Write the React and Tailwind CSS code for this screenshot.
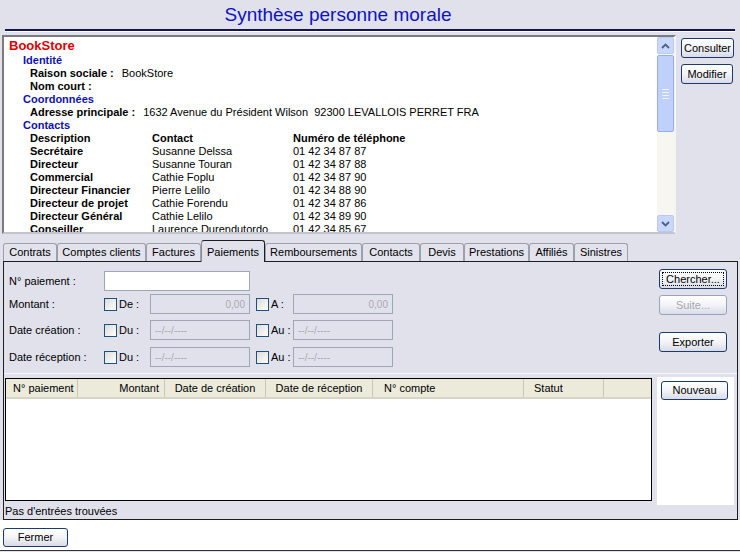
import React from 'react';

const Btn = ({ children, className = '', disabled = false, focused = false }) => (
  <button
    className={`flex items-center justify-center rounded-[3px] border bg-gradient-to-b from-white via-[#f3f4f8] to-[#d9dce7] text-[11px] leading-none ${
      disabled ? 'border-[#9aa3bd] text-[#a7a7ad]' : 'border-[#1c3a6b] text-black'
    } ${className}`}
  >
    {focused ? (
      <span className="flex h-[calc(100%-4px)] w-[calc(100%-4px)] items-center justify-center border border-dotted border-black">
        {children}
      </span>
    ) : (
      children
    )}
  </button>
);

const Check = () => (
  <span className="inline-block h-[13px] w-[13px] border border-[#1c5180] bg-gradient-to-br from-[#dcdcd7] to-white" />
);

const Field = ({ className = '', children, align = 'text-left' }) => (
  <div
    className={`flex h-[20px] items-center border border-[#9ea6b9] bg-[#e1e1ec] px-[4px] text-[10px] text-[#a9a9b1] ${align} ${className}`}
  >
    <span className="w-full">{children}</span>
  </div>
);

const Chevron = ({ down = false }) => (
  <svg width="9" height="6" viewBox="0 0 9 6">
    <path
      d={down ? 'M1 1 L4.5 4.5 L8 1' : 'M1 5 L4.5 1.5 L8 5'}
      fill="none"
      stroke="#4d6185"
      strokeWidth="1.8"
    />
  </svg>
);

const tabs = [
  { label: 'Contrats', w: 'w-[54px]' },
  { label: 'Comptes clients', w: 'w-[89px]' },
  { label: 'Factures', w: 'w-[55px]' },
  { label: 'Paiements', w: 'w-[64px]', active: true },
  { label: 'Remboursements', w: 'w-[97px]' },
  { label: 'Contacts', w: 'w-[58px]' },
  { label: 'Devis', w: 'w-[44px]' },
  { label: 'Prestations', w: 'w-[65px]' },
  { label: 'Affiliés', w: 'w-[45px]' },
  { label: 'Sinistres', w: 'w-[54px]' },
];

const contacts = [
  ['Secrétaire', 'Susanne Delssa', '01 42 34 87 87'],
  ['Directeur', 'Susanne Touran', '01 42 34 87 88'],
  ['Commercial', 'Cathie Foplu', '01 42 34 87 90'],
  ['Directeur Financier', 'Pierre Lelilo', '01 42 34 88 90'],
  ['Directeur de projet', 'Cathie Forendu', '01 42 34 87 86'],
  ['Directeur Général', 'Cathie Lelilo', '01 42 34 89 90'],
  ['Conseiller', 'Laurence Durendutordo', '01 42 34 85 67'],
];

export default function App() {
  return (
    <div className="flex h-[552px] w-[740px] flex-col overflow-hidden bg-[#e1e1ec] font-['Liberation_Sans',Arial,sans-serif] text-[11px] text-black">
      {/* Titre */}
      <div className="h-[29px] w-[676px] pt-[4px] text-center text-[19px] leading-[22px] text-[#0c12c4]">
        Synthèse personne morale
      </div>
      <div className="mx-[5px] h-[2px] bg-[#15154d]" />
      <div className="mx-[5px] h-[1px] bg-white" />
      <div className="h-[3px]" />

      {/* Fiche */}
      <div className="flex h-[199px]">
        <div className="ml-[2px] flex w-[674px] border-2 border-t-[#7b7b7b] border-l-[#7b7b7b] border-r-[#f4f4f4] border-b-[#c4c4cf] bg-white">
          <div className="flex-1 overflow-hidden pl-[5px] leading-[13px]">
            <div className="h-[17px] text-[13px] leading-[17px] font-bold text-[#e00000]">BookStore</div>
            <div className="pl-[14px] font-bold text-[#1010b4]">Identité</div>
            <div className="pl-[21px]">
              <span className="font-bold">Raison sociale :</span>
              <span className="ml-[8px]">BookStore</span>
            </div>
            <div className="pl-[21px] font-bold">Nom court :</div>
            <div className="pl-[14px] font-bold text-[#1010b4]">Coordonnées</div>
            <div className="pl-[21px] whitespace-pre">
              <span className="font-bold">Adresse principale :</span>
              <span className="ml-[8px]">1632 Avenue du Président Wilson  92300 LEVALLOIS PERRET FRA</span>
            </div>
            <div className="pl-[14px] font-bold text-[#1010b4]">Contacts</div>
            <div className="grid grid-cols-[122px_141px_1fr] pl-[21px]">
              <span className="font-bold">Description</span>
              <span className="font-bold">Contact</span>
              <span className="font-bold">Numéro de téléphone</span>
              {contacts.map(([d, c, t]) => (
                <React.Fragment key={d}>
                  <span className="font-bold">{d}</span>
                  <span>{c}</span>
                  <span>{t}</span>
                </React.Fragment>
              ))}
            </div>
          </div>
          {/* Barre de défilement */}
          <div className="flex w-[17px] flex-col bg-[#f7f6f1]">
            <div className="flex h-[17px] items-center justify-center rounded-[2px] border border-[#b9c9ef] bg-[#c8d7fb]">
              <Chevron />
            </div>
            <div className="mt-[1px] flex h-[77px] flex-col items-center justify-center gap-[2px] rounded-[2px] border border-[#98aee8] bg-[#bfd0fb]">
              <span className="h-[1px] w-[7px] bg-[#eef3ff]" />
              <span className="h-[1px] w-[7px] bg-[#eef3ff]" />
              <span className="h-[1px] w-[7px] bg-[#eef3ff]" />
              <span className="h-[1px] w-[7px] bg-[#eef3ff]" />
            </div>
            <div className="flex-1" />
            <div className="flex h-[17px] items-center justify-center rounded-[2px] border border-[#b9c9ef] bg-[#c8d7fb]">
              <Chevron down />
            </div>
          </div>
        </div>
        <div className="flex flex-col pl-[5px] pt-[3px]">
          <Btn className="h-[20px] w-[53px]">Consulter</Btn>
          <Btn className="mt-[6px] h-[20px] w-[52px]">Modifier</Btn>
        </div>
      </div>

      {/* Onglets */}
      <div className="mt-[6px] flex h-[21px] items-end pl-[3px]">
        {tabs.map((t) =>
          t.active ? (
            <div
              key={t.label}
              className={`relative z-10 -mb-px flex h-[22px] items-start justify-center rounded-t-[3px] border border-b-0 border-[#1e1e1e] border-l-[#8b8b95] bg-[#e1e1ec] pt-[3px] ${t.w}`}
            >
              {t.label}
            </div>
          ) : (
            <div
              key={t.label}
              className={`flex h-[18px] items-center justify-center rounded-t-[3px] border border-b-0 border-[#9ba0ac] bg-[#e3e3ed] ${t.w}`}
            >
              {t.label}
            </div>
          )
        )}
      </div>

      {/* Panneau Paiements */}
      <div className="ml-[3px] flex h-[259px] w-[735px] flex-col border border-[#1e1e1e] bg-[#e1e1ec]">
        <div className="flex h-[110px]">
          <div className="flex flex-col pl-[5px]">
            <div className="mt-[9px] flex h-[20px] items-center">
              <span className="w-[95px]">N° paiement :</span>
              <div className="h-[20px] w-[146px] border border-[#9ea6b9] bg-white" />
            </div>
            <div className="mt-[3px] flex h-[20px] items-center">
              <span className="w-[95px]">Montant :</span>
              <span className="flex w-[46px] items-center gap-[2px]">
                <Check />
                De :
              </span>
              <Field className="w-[100px]" align="text-right">0,00</Field>
              <span className="ml-[6px] flex w-[37px] items-center gap-[2px]">
                <Check />
                A :
              </span>
              <Field className="w-[100px]" align="text-right">0,00</Field>
            </div>
            <div className="mt-[6px] flex h-[20px] items-center">
              <span className="w-[95px]">Date création :</span>
              <span className="flex w-[46px] items-center gap-[2px]">
                <Check />
                Du :
              </span>
              <Field className="w-[100px]">--/--/----</Field>
              <span className="ml-[6px] flex w-[37px] items-center gap-[2px]">
                <Check />
                Au :
              </span>
              <Field className="w-[100px]">--/--/----</Field>
            </div>
            <div className="mt-[7px] flex h-[20px] items-center">
              <span className="w-[95px]">Date réception :</span>
              <span className="flex w-[46px] items-center gap-[2px]">
                <Check />
                Du :
              </span>
              <Field className="w-[100px]">--/--/----</Field>
              <span className="ml-[6px] flex w-[37px] items-center gap-[2px]">
                <Check />
                Au :
              </span>
              <Field className="w-[100px]">--/--/----</Field>
            </div>
          </div>
          <div className="ml-auto mr-[10px] flex flex-col pt-[7px]">
            <Btn className="h-[20px] w-[68px]" focused>Chercher...</Btn>
            <Btn className="mt-[6px] h-[20px] w-[68px]" disabled>Suite...</Btn>
            <Btn className="mt-[17px] h-[20px] w-[68px]">Exporter</Btn>
          </div>
        </div>

        <div className="mt-[1px] h-[1px] bg-[#f6f6fa]" />
        <div className="h-[1px]" />

        {/* Liste */}
        <div className="flex h-[129px]">
          <div className="ml-[1px] mt-[3px] h-[123px] w-[647px] border border-black bg-white">
            <div className="flex h-[20px] border-b-2 border-[#d9d5c4] bg-[#ebeadb] text-[11px]">
              <div className="flex w-[72px] items-center border-r border-[#c9c6b5] pl-[7px]">N° paiement</div>
              <div className="flex w-[87px] items-center justify-end border-r border-[#c9c6b5] pr-[5px]">Montant</div>
              <div className="flex w-[101px] items-center justify-center border-r border-[#c9c6b5]">Date de création</div>
              <div className="flex w-[107px] items-center justify-center border-r border-[#c9c6b5]">Date de réception</div>
              <div className="flex w-[151px] items-center border-r border-[#c9c6b5] pl-[11px]">N° compte</div>
              <div className="flex w-[80px] items-center border-r border-[#c9c6b5] pl-[10px]">Statut</div>
              <div className="flex-1" />
            </div>
          </div>
          <div className="ml-[5px] mt-[2px] h-[128px] w-[77px] bg-white pl-[4px] pt-[4px]">
            <Btn className="h-[19px] w-[67px]">Nouveau</Btn>
          </div>
        </div>
        <div className="h-[14px] pl-[1px] leading-[14px]">Pas d'entrées trouvées</div>
      </div>

      {/* Pied */}
      <div className="flex h-[31px] items-start border-b border-[#333] bg-white pl-[3px] pt-[8px]">
        <Btn className="h-[19px] w-[65px]">Fermer</Btn>
      </div>
    </div>
  );
}
